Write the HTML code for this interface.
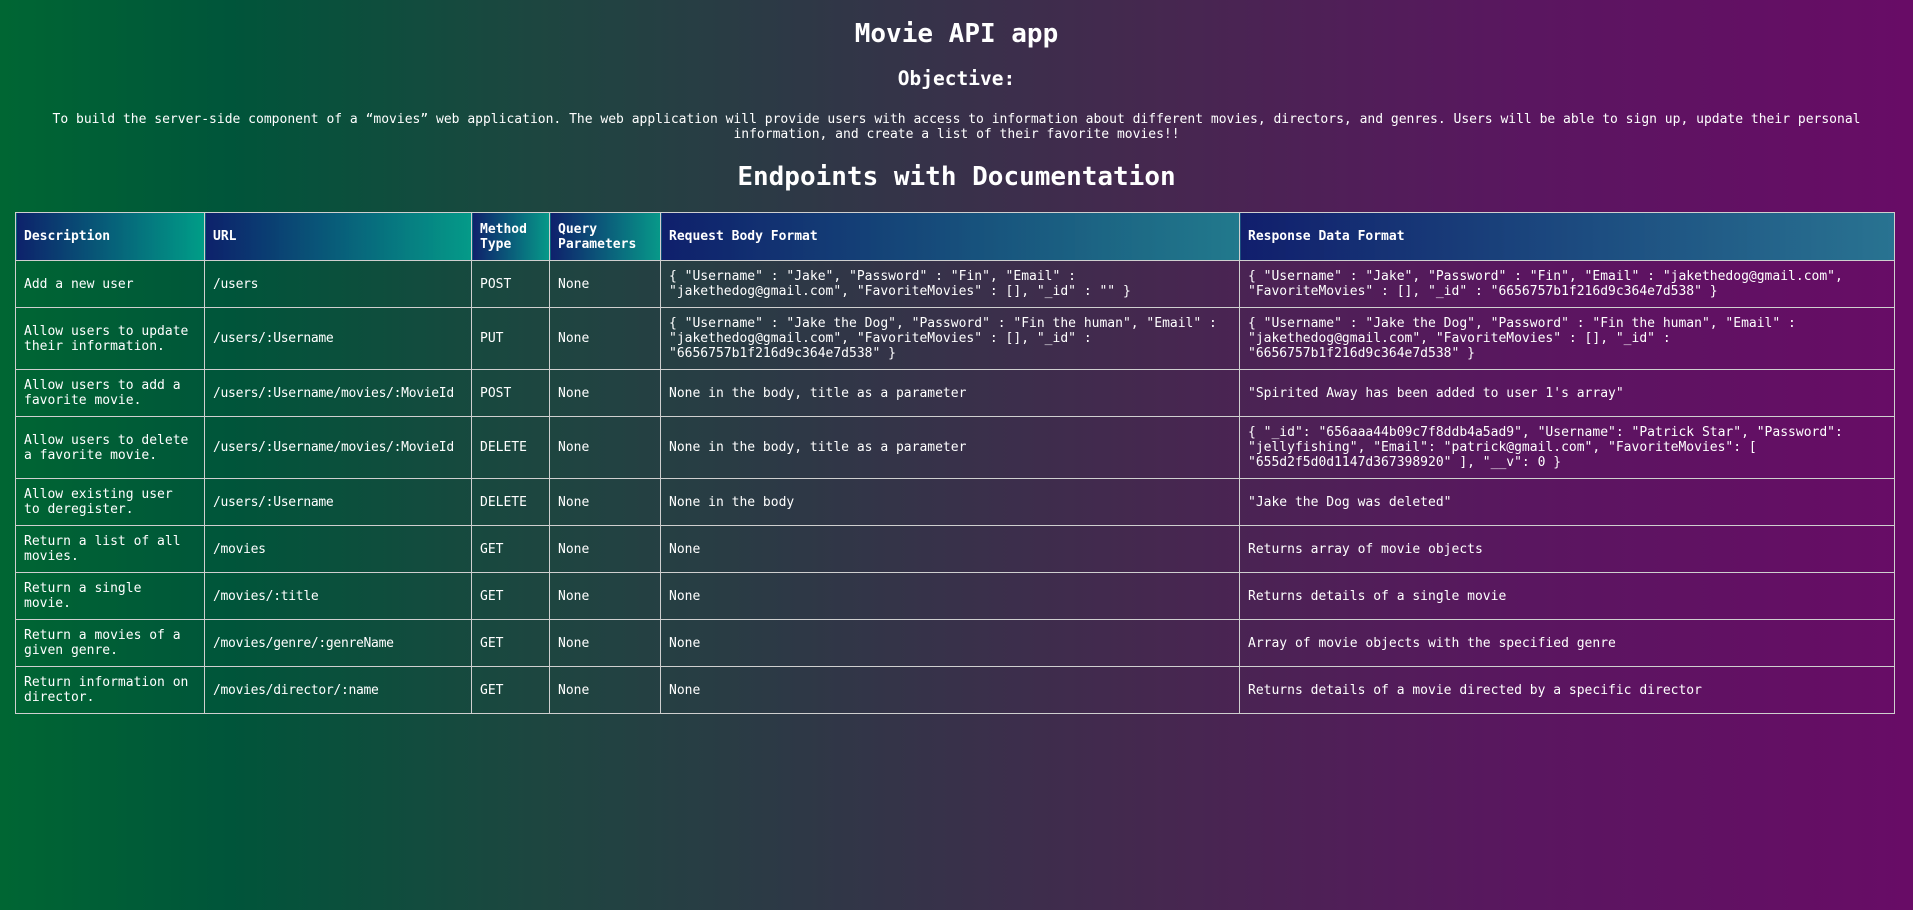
<!DOCTYPE html>
<html><head><meta charset="utf-8"><style>
html,body{margin:0;padding:0}
body{width:1913px;height:910px;overflow:hidden;background:linear-gradient(to right,#006633 0%,#00553a 12%,#1d4640 28%,#2e3846 42%,#45284f 60%,#5a1660 80%,#680c66 100%);color:#fff;font-family:"DejaVu Sans Mono","Liberation Mono",monospace;}
h1{margin:0;position:absolute;top:17px;width:1913px;text-align:center;font-size:26px;line-height:34px;font-weight:bold}
h3{margin:0;position:absolute;top:67px;width:1913px;text-align:center;font-size:19.5px;line-height:24px;font-weight:bold}
p{margin:0;position:absolute;top:112px;left:45px;width:1823px;text-align:center;font-size:13px;line-height:15px}
h2{margin:0;position:absolute;top:160px;width:1913px;text-align:center;font-size:26px;line-height:34px;font-weight:bold}
table{position:absolute;top:212px;left:15px;width:1879px;border-collapse:collapse;table-layout:fixed;font-size:13px;line-height:15px}
td,th{border:1px solid #cfcfcf;padding:8px 8px;text-align:left;vertical-align:middle;word-wrap:break-word}
td:nth-child(2){white-space:nowrap;letter-spacing:-0.3px}
th{font-weight:bold;height:31px;background:linear-gradient(to right,rgba(14,30,110,.95),rgba(0,175,155,.8))}
th:nth-child(5),th:nth-child(6){background:linear-gradient(to right,rgba(14,30,110,.95),rgba(20,150,160,.75))}
</style></head><body>
<h1>Movie API app</h1>
<h3>Objective:</h3>
<p>To build the server-side component of a “movies” web application. The web application will provide users with access to information about different movies, directors, and genres. Users will be able to sign up, update their personal information, and create a list of their favorite movies!!</p>
<h2>Endpoints with Documentation</h2>
<table>
<colgroup><col style="width:189px"><col style="width:267px"><col style="width:78px"><col style="width:111px"><col style="width:579px"><col style="width:655px"></colgroup>
<tr><th>Description</th><th>URL</th><th>Method Type</th><th>Query Parameters</th><th>Request Body Format</th><th>Response Data Format</th></tr>
<tr><td>Add a new user</td><td>/users</td><td>POST</td><td>None</td><td>{ "Username" : "Jake", "Password" : "Fin", "Email" : "jakethedog@gmail.com", "FavoriteMovies" : [], "_id" : "" }</td><td>{ "Username" : "Jake", "Password" : "Fin", "Email" : "jakethedog@gmail.com", "FavoriteMovies" : [], "_id" : "6656757b1f216d9c364e7d538" }</td></tr>
<tr><td>Allow users to update their information.</td><td>/users/:Username</td><td>PUT</td><td>None</td><td>{ "Username" : "Jake the Dog", "Password" : "Fin the human", "Email" : "jakethedog@gmail.com", "FavoriteMovies" : [], "_id" : "6656757b1f216d9c364e7d538" }</td><td>{ "Username" : "Jake the Dog", "Password" : "Fin the human", "Email" : "jakethedog@gmail.com", "FavoriteMovies" : [], "_id" : "6656757b1f216d9c364e7d538" }</td></tr>
<tr><td>Allow users to add a favorite movie.</td><td>/users/:Username/movies/:MovieId</td><td>POST</td><td>None</td><td>None in the body, title as a parameter</td><td>"Spirited Away has been added to user 1's array"</td></tr>
<tr><td>Allow users to delete a favorite movie.</td><td>/users/:Username/movies/:MovieId</td><td>DELETE</td><td>None</td><td>None in the body, title as a parameter</td><td>{ "_id": "656aaa44b09c7f8ddb4a5ad9", "Username": "Patrick Star", "Password": "jellyfishing", "Email": "patrick@gmail.com", "FavoriteMovies": [ "655d2f5d0d1147d367398920" ], "__v": 0 }</td></tr>
<tr><td>Allow existing user to deregister.</td><td>/users/:Username</td><td>DELETE</td><td>None</td><td>None in the body</td><td>"Jake the Dog was deleted"</td></tr>
<tr><td>Return a list of all movies.</td><td>/movies</td><td>GET</td><td>None</td><td>None</td><td>Returns array of movie objects</td></tr>
<tr><td>Return a single movie.</td><td>/movies/:title</td><td>GET</td><td>None</td><td>None</td><td>Returns details of a single movie</td></tr>
<tr><td>Return a movies of a given genre.</td><td>/movies/genre/:genreName</td><td>GET</td><td>None</td><td>None</td><td>Array of movie objects with the specified genre</td></tr>
<tr><td>Return information on director.</td><td>/movies/director/:name</td><td>GET</td><td>None</td><td>None</td><td>Returns details of a movie directed by a specific director</td></tr>
</table>
</body></html>
